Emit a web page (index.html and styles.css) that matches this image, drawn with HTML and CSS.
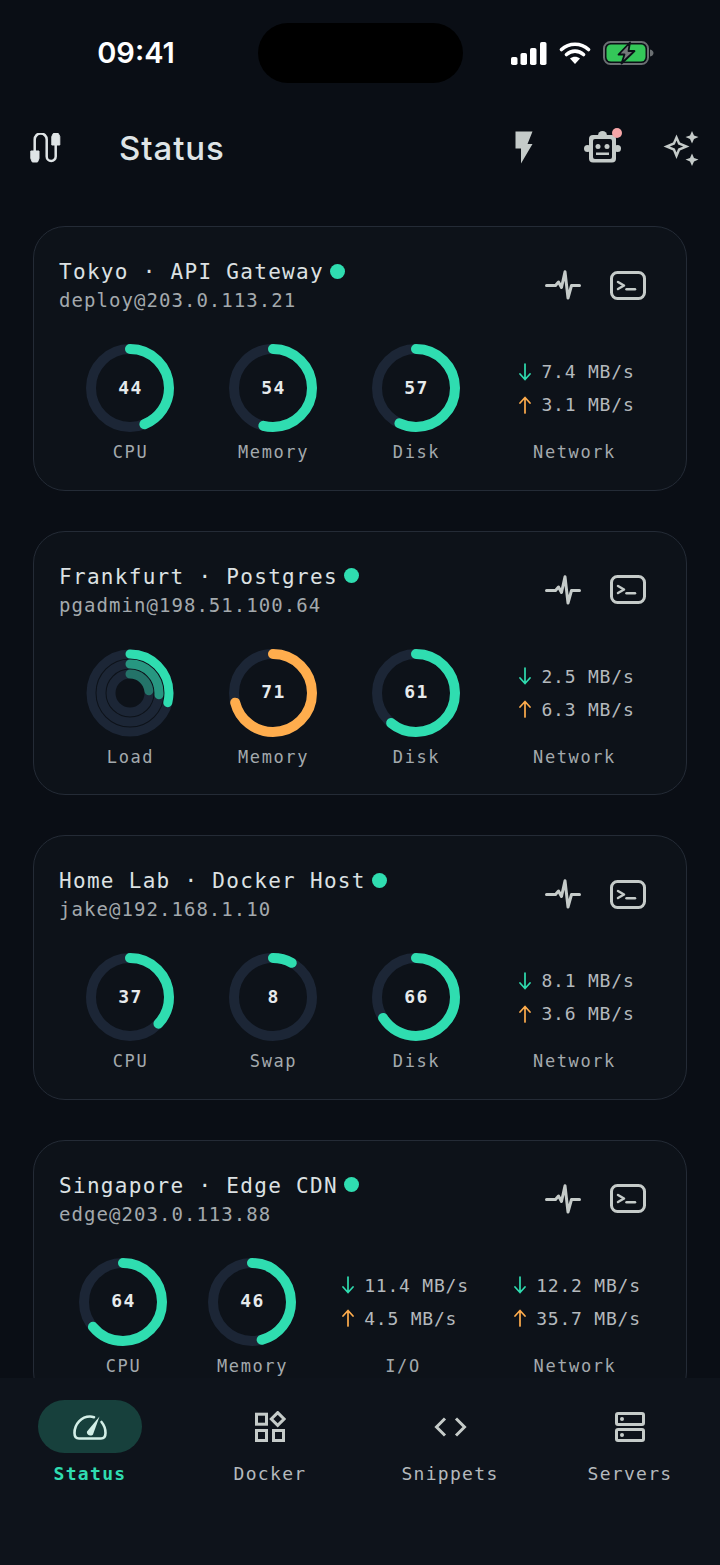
FILE: index.html

```html
<!DOCTYPE html>
<html lang="en">
<head>
  <meta charset="UTF-8" />
  <meta name="viewport" content="width=device-width, initial-scale=1.0" />
  <title>Status</title>
  <link rel="stylesheet" href="styles.css">
</head>
<body>
  <svg class="defs">
    <symbol id="i-pulse" viewBox="0 0 36 30">
      <path d="M1.500 15.500H10.500L13.500 12L16.500 17.500L20 1.700L23 28L26.500 15.500H34.500" fill="none" stroke="currentColor" stroke-width="3" stroke-linecap="round" stroke-linejoin="round"/>
    </symbol>
    <symbol id="i-term" viewBox="0 0 36 29">
      <rect x="1.500" y="1.500" width="33" height="26" rx="6" fill="none" stroke="currentColor" stroke-width="3"/>
      <path d="M8 11L14 14.500L8 18" fill="none" stroke="currentColor" stroke-width="2.500" stroke-linecap="round" stroke-linejoin="round"/>
      <path d="M16.500 18.200H25" fill="none" stroke="currentColor" stroke-width="2.500" stroke-linecap="round"/>
    </symbol>
    <symbol id="i-down" viewBox="0 0 12 18">
      <path d="M6 1V16.500M1 11L6 16.500L11 11" fill="none" stroke="currentColor" stroke-width="1.700" stroke-linecap="round" stroke-linejoin="round"/>
    </symbol>
    <symbol id="i-up" viewBox="0 0 12 18">
      <path d="M6 17V1.500M1 7L6 1.500L11 7" fill="none" stroke="currentColor" stroke-width="1.700" stroke-linecap="round" stroke-linejoin="round"/>
    </symbol>
  </svg>

  <div class="screen">
    <div class="statusbar">
      <div class="time">09:41</div>
      <div class="island"></div>
      <div class="sys-icons">
        <svg width="36" height="23" viewBox="0 0 36 23" fill="#fff">
          <rect x="0" y="15" width="6.500" height="8" rx="1.800"/>
          <rect x="9.500" y="11" width="6.500" height="12" rx="1.800"/>
          <rect x="19" y="6" width="6.500" height="17" rx="1.800"/>
          <rect x="29" y="0" width="6.500" height="23" rx="1.800"/>
        </svg>
        <svg width="32" height="24" viewBox="0 0 32 24">
          <path d="M2.500 8.500C10 1.500 22 1.500 29.500 8.500M7.500 13.500C12.500 9 19.500 9 24.500 13.500" fill="none" stroke="#fff" stroke-width="3.600" stroke-linecap="round"/>
          <path d="M11 17.500C14 15 18 15 21 17.500L16 23Z" fill="#fff"/>
        </svg>
        <svg width="51" height="24" viewBox="0 0 51 24">
          <rect x="1" y="1" width="44" height="22" rx="6.500" fill="none" stroke="#6b6f72" stroke-width="2"/>
          <rect x="3.500" y="3.500" width="39" height="17" rx="4.500" fill="#34c759"/>
          <path d="M47 8.500C49.500 9 50.500 10.500 50.500 12C50.500 13.500 49.500 15 47 15.500Z" fill="#6b6f72"/>
          <path d="M27 1.500L15.500 13.500H21.500L18.500 22.500L31.500 10H25.500Z" fill="#74787a" stroke="#0b0f16" stroke-width="1.800" stroke-linejoin="round"/>
        </svg>
      </div>
    </div>

    <header class="topbar">
      <svg class="cable" width="31" height="30" viewBox="0 0 31 30">
        <path d="M4.700 19V6.500A6 6 0 0 1 16.700 6.500V23.500A4.500 4.500 0 0 0 25.700 23.500V10" fill="none" stroke="#dfe4e6" stroke-width="2.500"/>
        <path d="M0.800 18H9V25.500L7.500 29H2.300L0.800 25.500Z M21.800 3.500L23.300 0.500H28.300L29.800 3.500V12H21.800Z" fill="#dfe4e6" stroke="#dfe4e6" stroke-linejoin="round"/>
      </svg>
      <h1 class="page-title">Status</h1>
      <div class="top-actions">
        <svg class="top-bolt" width="18" height="33" viewBox="0 0 18 33" fill="#c5cbc9">
          <path d="M0.500 0.500H17.500L12.500 13H17.500L6 32.500V17.500H0.500Z"/>
        </svg>
        <span class="robot">
          <svg width="37" height="33" viewBox="0 0 37 33">
            <path d="M14 4.500A4.500 4.500 0 0 1 23 4.500Z" fill="#c5cbc9"/>
            <circle cx="3.500" cy="17.500" r="3.500" fill="#c5cbc9"/>
            <circle cx="33.500" cy="17.500" r="3.500" fill="#c5cbc9"/>
            <rect x="5" y="4" width="27" height="27.500" rx="4" fill="#c5cbc9"/>
            <rect x="9" y="8" width="19" height="20" rx="2" fill="#0b0f16"/>
            <circle cx="14" cy="15.500" r="2.500" fill="#c5cbc9"/>
            <circle cx="23" cy="15.500" r="2.500" fill="#c5cbc9"/>
            <rect x="12" y="21.500" width="13" height="2.500" fill="#c5cbc9"/>
          </svg>
          <span class="badge"></span>
        </span>
        <svg width="36" height="36" viewBox="0 0 36 36" fill="#c5cbc9">
          <path fill-rule="evenodd" d="M13.500 3.500L17 11.500L26.500 15.500L17 19.500L13.500 28L10 19.500L0.500 15.500L10 11.500Z M13.500 9.500L11.800 13.600L6.800 15.500L11.800 17.400L13.500 21.500L15.200 17.400L20.200 15.500L15.200 13.600Z"/>
          <path d="M29 0L31 4.500L35.500 6L31 8L29 12.500L27 8L22.500 6L27 4.500Z"/>
          <path d="M29 22.500L31 27L35.500 28.500L31 30.500L29 35L27 30.500L22.500 28.500L27 27Z"/>
        </svg>
      </div>
    </header>

    <main class="list">
      <section class="card">
        <div class="card-head">
          <div>
            <div class="card-title">Tokyo · API Gateway<span class="dot"></span></div>
            <div class="card-sub">deploy@203.0.113.21</div>
          </div>
          <div class="card-actions">
            <svg class="ic-pulse"><use href="#i-pulse"/></svg>
            <svg class="ic-term"><use href="#i-term"/></svg>
          </div>
        </div>
        <div class="metrics">
          <div class="metric">
            <div class="gauge">
              <svg width="88" height="88" viewBox="0 0 88 88"><circle class="track" cx="44" cy="44" r="39"/><circle class="arc" cx="44" cy="44" r="39" pathLength="100" stroke-dasharray="44 100"/></svg>
              <span class="gauge-val">44</span>
            </div>
            <div class="metric-label">CPU</div>
          </div>
          <div class="metric">
            <div class="gauge">
              <svg width="88" height="88" viewBox="0 0 88 88"><circle class="track" cx="44" cy="44" r="39"/><circle class="arc" cx="44" cy="44" r="39" pathLength="100" stroke-dasharray="54 100"/></svg>
              <span class="gauge-val">54</span>
            </div>
            <div class="metric-label">Memory</div>
          </div>
          <div class="metric">
            <div class="gauge">
              <svg width="88" height="88" viewBox="0 0 88 88"><circle class="track" cx="44" cy="44" r="39"/><circle class="arc" cx="44" cy="44" r="39" pathLength="100" stroke-dasharray="57 100"/></svg>
              <span class="gauge-val">57</span>
            </div>
            <div class="metric-label">Disk</div>
          </div>
          <div class="metric metric-net">
            <div class="rates">
              <div class="rate"><svg class="arrow down"><use href="#i-down"/></svg>7.4 MB/s</div>
              <div class="rate"><svg class="arrow up"><use href="#i-up"/></svg>3.1 MB/s</div>
            </div>
            <div class="metric-label">Network</div>
          </div>
        </div>
      </section>

      <section class="card">
        <div class="card-head">
          <div>
            <div class="card-title">Frankfurt · Postgres<span class="dot"></span></div>
            <div class="card-sub">pgadmin@198.51.100.64</div>
          </div>
          <div class="card-actions">
            <svg class="ic-pulse"><use href="#i-pulse"/></svg>
            <svg class="ic-term"><use href="#i-term"/></svg>
          </div>
        </div>
        <div class="metrics">
          <div class="metric">
            <div class="gauge">
              <svg width="88" height="88" viewBox="0 0 88 88">
                <circle class="track thin" cx="44" cy="44" r="39"/>
                <circle class="track thin" cx="44" cy="44" r="29"/>
                <circle class="track thin" cx="44" cy="44" r="19"/>
                <circle class="arc thin" cx="44" cy="44" r="39" pathLength="100" stroke-dasharray="29 100"/>
                <circle class="arc thin mid" cx="44" cy="44" r="29" pathLength="100" stroke-dasharray="26 100"/>
                <circle class="arc thin low" cx="44" cy="44" r="19" pathLength="100" stroke-dasharray="23 100"/>
              </svg>
            </div>
            <div class="metric-label">Load</div>
          </div>
          <div class="metric">
            <div class="gauge">
              <svg width="88" height="88" viewBox="0 0 88 88"><circle class="track" cx="44" cy="44" r="39"/><circle class="arc warn" cx="44" cy="44" r="39" pathLength="100" stroke-dasharray="71 100"/></svg>
              <span class="gauge-val">71</span>
            </div>
            <div class="metric-label">Memory</div>
          </div>
          <div class="metric">
            <div class="gauge">
              <svg width="88" height="88" viewBox="0 0 88 88"><circle class="track" cx="44" cy="44" r="39"/><circle class="arc" cx="44" cy="44" r="39" pathLength="100" stroke-dasharray="61 100"/></svg>
              <span class="gauge-val">61</span>
            </div>
            <div class="metric-label">Disk</div>
          </div>
          <div class="metric metric-net">
            <div class="rates">
              <div class="rate"><svg class="arrow down"><use href="#i-down"/></svg>2.5 MB/s</div>
              <div class="rate"><svg class="arrow up"><use href="#i-up"/></svg>6.3 MB/s</div>
            </div>
            <div class="metric-label">Network</div>
          </div>
        </div>
      </section>

      <section class="card">
        <div class="card-head">
          <div>
            <div class="card-title">Home Lab · Docker Host<span class="dot"></span></div>
            <div class="card-sub">jake@192.168.1.10</div>
          </div>
          <div class="card-actions">
            <svg class="ic-pulse"><use href="#i-pulse"/></svg>
            <svg class="ic-term"><use href="#i-term"/></svg>
          </div>
        </div>
        <div class="metrics">
          <div class="metric">
            <div class="gauge">
              <svg width="88" height="88" viewBox="0 0 88 88"><circle class="track" cx="44" cy="44" r="39"/><circle class="arc" cx="44" cy="44" r="39" pathLength="100" stroke-dasharray="37 100"/></svg>
              <span class="gauge-val">37</span>
            </div>
            <div class="metric-label">CPU</div>
          </div>
          <div class="metric">
            <div class="gauge">
              <svg width="88" height="88" viewBox="0 0 88 88"><circle class="track" cx="44" cy="44" r="39"/><circle class="arc" cx="44" cy="44" r="39" pathLength="100" stroke-dasharray="8 100"/></svg>
              <span class="gauge-val">8</span>
            </div>
            <div class="metric-label">Swap</div>
          </div>
          <div class="metric">
            <div class="gauge">
              <svg width="88" height="88" viewBox="0 0 88 88"><circle class="track" cx="44" cy="44" r="39"/><circle class="arc" cx="44" cy="44" r="39" pathLength="100" stroke-dasharray="66 100"/></svg>
              <span class="gauge-val">66</span>
            </div>
            <div class="metric-label">Disk</div>
          </div>
          <div class="metric metric-net">
            <div class="rates">
              <div class="rate"><svg class="arrow down"><use href="#i-down"/></svg>8.1 MB/s</div>
              <div class="rate"><svg class="arrow up"><use href="#i-up"/></svg>3.6 MB/s</div>
            </div>
            <div class="metric-label">Network</div>
          </div>
        </div>
      </section>

      <section class="card">
        <div class="card-head">
          <div>
            <div class="card-title">Singapore · Edge CDN<span class="dot"></span></div>
            <div class="card-sub">edge@203.0.113.88</div>
          </div>
          <div class="card-actions">
            <svg class="ic-pulse"><use href="#i-pulse"/></svg>
            <svg class="ic-term"><use href="#i-term"/></svg>
          </div>
        </div>
        <div class="metrics metrics-wide">
          <div class="metric">
            <div class="gauge">
              <svg width="88" height="88" viewBox="0 0 88 88"><circle class="track" cx="44" cy="44" r="39"/><circle class="arc" cx="44" cy="44" r="39" pathLength="100" stroke-dasharray="64 100"/></svg>
              <span class="gauge-val">64</span>
            </div>
            <div class="metric-label">CPU</div>
          </div>
          <div class="metric">
            <div class="gauge">
              <svg width="88" height="88" viewBox="0 0 88 88"><circle class="track" cx="44" cy="44" r="39"/><circle class="arc" cx="44" cy="44" r="39" pathLength="100" stroke-dasharray="46 100"/></svg>
              <span class="gauge-val">46</span>
            </div>
            <div class="metric-label">Memory</div>
          </div>
          <div class="metric metric-net">
            <div class="rates">
              <div class="rate"><svg class="arrow down"><use href="#i-down"/></svg>11.4 MB/s</div>
              <div class="rate"><svg class="arrow up"><use href="#i-up"/></svg>4.5 MB/s</div>
            </div>
            <div class="metric-label">I/O</div>
          </div>
          <div class="metric metric-net">
            <div class="rates">
              <div class="rate"><svg class="arrow down"><use href="#i-down"/></svg>12.2 MB/s</div>
              <div class="rate"><svg class="arrow up"><use href="#i-up"/></svg>35.7 MB/s</div>
            </div>
            <div class="metric-label">Network</div>
          </div>
        </div>
      </section>
    </main>

    <nav class="tabbar">
      <div class="tab active">
        <div class="tab-pill">
          <svg width="34" height="26" viewBox="0 0 34 26" fill="none" stroke="#d3efe7" stroke-width="2.600" stroke-linecap="round" stroke-linejoin="round">
            <path d="M21 3.200C19.700 2.800 18.400 2.500 17 2.500C8.500 2.500 1.500 10 1.500 19C1.500 22.500 3.200 24.500 6 24.500H28C30.800 24.500 32.500 22.500 32.500 19C32.500 15 31 11 28.500 8"/>
            <path d="M14 17.500L26.500 2.500L20 20.500C18.500 23 13 21 14 17.500Z" fill="#d3efe7" stroke="none"/>
          </svg>
        </div>
        <div class="tab-label">Status</div>
      </div>
      <div class="tab">
        <div class="tab-pill">
          <svg width="32" height="32" viewBox="-1 0 32 32" fill="none" stroke="#c5cbc9" stroke-width="3">
            <rect x="1.500" y="3.200" width="10" height="10"/>
            <path d="M22.700 1.600L29.100 8L22.700 14.400L16.300 8Z"/>
            <rect x="1.500" y="19.500" width="10" height="10"/>
            <rect x="18.500" y="19.500" width="10" height="10"/>
          </svg>
        </div>
        <div class="tab-label">Docker</div>
      </div>
      <div class="tab">
        <div class="tab-pill">
          <svg width="33" height="20" viewBox="0 0 33 20" fill="none" stroke="#c5cbc9" stroke-width="3">
            <path d="M11 1.500L2.500 10L11 18.500M22 1.500L30.500 10L22 18.500"/>
          </svg>
        </div>
        <div class="tab-label">Snippets</div>
      </div>
      <div class="tab">
        <div class="tab-pill">
          <svg width="30" height="30" viewBox="0 0 30 30">
            <rect x="1.500" y="1.500" width="27" height="11" rx="1.500" fill="none" stroke="#c5cbc9" stroke-width="3"/>
            <rect x="1.500" y="17.500" width="27" height="11" rx="1.500" fill="none" stroke="#c5cbc9" stroke-width="3"/>
            <circle cx="7" cy="7" r="2" fill="#c5cbc9"/>
            <circle cx="7" cy="23" r="2" fill="#c5cbc9"/>
          </svg>
        </div>
        <div class="tab-label">Servers</div>
      </div>
    </nav>
  </div>
</body>
</html>
```

FILE: styles.css

```css
* { box-sizing: border-box; }
html, body { margin: 0; padding: 0; }
body {
  background: #0a0e15;
  font-family: "DejaVu Sans Mono", monospace;
}
.defs { display: none; }

.screen {
  width: 720px;
  height: 1565px;
  display: flex;
  flex-direction: column;
  overflow: hidden;
}

/* status bar */
.statusbar {
  height: 83px;
  padding-top: 23px;
  display: grid;
  grid-template-columns: 258px 205px 257px;
  flex: none;
}
.time {
  font-family: Inter, sans-serif;
  font-size: 29px;
  font-weight: 600;
  line-height: 60px;
  color: #fff;
  text-align: center;
  padding-left: 14px;
}
.island {
  height: 60px;
  background: #000;
  border-radius: 30px;
}
.sys-icons {
  display: flex;
  align-items: center;
  gap: 12px;
  padding-left: 48px;
}

/* top bar */
.topbar {
  height: 143px;
  padding: 48px 21px 0 30px;
  display: flex;
  align-items: flex-start;
  flex: none;
}
.cable { margin-top: 2px; }
.page-title {
  margin: -3px 0 0 58px;
  font-family: Inter, sans-serif;
  font-size: 33px;
  font-weight: 500;
  letter-spacing: 0.9px;
  line-height: 40px;
  color: #dfe4e6;
}
.top-actions {
  margin-left: auto;
  display: flex;
  align-items: flex-start;
  gap: 42px;
}
.top-bolt { margin-right: 9px; }
.robot { position: relative; display: block; height: 33px; }
.robot svg { display: block; }
.badge {
  position: absolute;
  top: -3px;
  right: -1px;
  width: 10px;
  height: 10px;
  border-radius: 50%;
  background: #f7a6a8;
}

/* cards */
.list {
  flex: 1;
  min-height: 0;
  overflow: hidden;
  padding: 0 33px;
  display: flex;
  flex-direction: column;
  gap: 40px;
}
.card {
  flex: none;
  height: 264.5px;
  padding: 31px 25px 0;
  background: #0d1219;
  border: 1px solid #242b36;
  border-radius: 32px;
}
.card-head {
  display: flex;
  justify-content: space-between;
  height: 58px;
}
.card-title {
  display: flex;
  align-items: center;
  font-size: 21px;
  line-height: 28px;
  letter-spacing: 1.3px;
  color: #dce1e3;
  white-space: pre;
}
.dot {
  width: 15px;
  height: 15px;
  margin-left: 6px;
  margin-top: -2px;
  border-radius: 50%;
  background: #2fddb0;
}
.card-sub {
  font-size: 19px;
  line-height: 29px;
  letter-spacing: 1.05px;
  color: #a3a9ad;
}
.card-actions {
  display: flex;
  align-items: center;
  gap: 29px;
  padding-right: 15px;
  height: 54px;
  color: #c5cbc9;
}
.ic-pulse { width: 36px; height: 30px; }
.ic-term { width: 36px; height: 29px; }

.metrics {
  display: flex;
  margin-top: 28px;
}
.metric {
  flex: 1;
  min-width: 0;
  display: flex;
  flex-direction: column;
  align-items: center;
}
.metric-net { flex: none; width: 173px; }
.metrics-wide .metric { flex: none; width: 129px; }
.metrics-wide .metric-net { width: 172px; }
.gauge {
  display: grid;
  place-items: center;
  width: 88px;
  height: 88px;
  margin-left: -1px;
}
.gauge svg, .gauge-val { grid-area: 1 / 1; }
.gauge svg { transform: rotate(-90deg); }
.track, .arc { fill: none; stroke-width: 10; }
.track { stroke: #1c2636; }
.arc { stroke: #2fddb0; stroke-linecap: round; }
.arc.warn { stroke: #ffad4d; }
.thin { stroke-width: 9; }
.arc.mid { opacity: 0.62; }
.arc.low { opacity: 0.42; }
.gauge-val {
  margin: -2px 0 0 1px;
  font-size: 18px;
  font-weight: 700;
  letter-spacing: 1.4px;
  color: #e6eaec;
}
.metric-label {
  margin-top: 8px;
  font-size: 17px;
  line-height: 24px;
  letter-spacing: 1.6px;
  color: #a3a9ad;
}
.rates {
  height: 88px;
  margin-left: 5px;
  display: flex;
  flex-direction: column;
  justify-content: center;
}
.rate {
  display: flex;
  align-items: center;
  gap: 10px;
  font-size: 18px;
  line-height: 33px;
  letter-spacing: 0.8px;
  color: #b4b9bd;
  white-space: pre;
}
.arrow { width: 12px; height: 18px; flex: none; }
.arrow.down { color: #2fddb0; }
.arrow.up { color: #ffad4d; }

/* bottom tabs */
.tabbar {
  height: 187px;
  flex: none;
  padding-top: 22px;
  background: #0e131b;
  display: grid;
  grid-template-columns: repeat(4, 1fr);
  align-items: start;
}
.tab {
  display: flex;
  flex-direction: column;
  align-items: center;
}
.tab-pill {
  width: 104px;
  height: 53px;
  border-radius: 27px;
  display: flex;
  align-items: center;
  justify-content: center;
}
.tab.active .tab-pill { background: #17403c; }
.tab-label {
  margin-top: 9px;
  font-size: 18px;
  line-height: 24px;
  letter-spacing: 1.3px;
  color: #b4b9bd;
}
.tab.active .tab-label {
  color: #2fddb0;
  font-weight: 700;
}
```
